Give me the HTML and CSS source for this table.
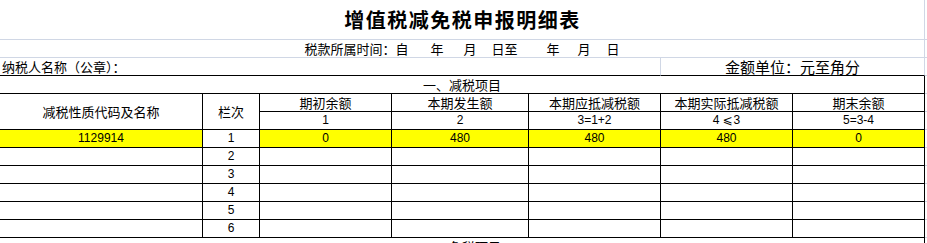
FILE: index.html
```html
<!DOCTYPE html>
<html lang="zh-CN">
<head>
<meta charset="utf-8">
<title>增值税减免税申报明细表</title>
<link rel="stylesheet" href="styles.css">
</head>
<body>
<div class="page">
  <div class="band">
    <div class="cell-wide title-cell"><h1 class="title">增值税减免税申报明细表</h1></div>
    <div class="filler"></div>
  </div>
  <div class="band">
    <div class="cell-wide period">
      <span>税款所属时间：自</span><span class="g22">年</span><span class="g20">月</span><span class="g15">日至</span><span class="g29">年</span><span class="g18">月</span><span class="g16">日</span>
    </div>
    <div class="filler"></div>
  </div>
  <div class="band">
    <div class="cell-left taxpayer">纳税人名称（公章）：</div>
    <div class="cell-right unit">金额单位：元至角分</div>
    <div class="filler"></div>
  </div>
  <div class="table-wrap">
    <div class="grid">
      <div class="c span-all">一、减税项目</div>
      <div class="c rs2">减税性质代码及名称</div>
      <div class="c rs2">栏次</div>
      <div class="c">期初余额</div>
      <div class="c">本期发生额</div>
      <div class="c">本期应抵减税额</div>
      <div class="c">本期实际抵减税额</div>
      <div class="c">期末余额</div>
      <div class="c num">1</div>
      <div class="c num">2</div>
      <div class="c num">3=1+2</div>
      <div class="c num">4<span class="le">⩽</span>3</div>
      <div class="c num">5=3-4</div>

      <div class="c num hl">1129914</div>
      <div class="c num">1</div>
      <div class="c num hl">0</div>
      <div class="c num hl">480</div>
      <div class="c num hl">480</div>
      <div class="c num hl">480</div>
      <div class="c num hl">0</div>

      <div class="c"></div><div class="c num">2</div><div class="c"></div><div class="c"></div><div class="c"></div><div class="c"></div><div class="c"></div>
      <div class="c"></div><div class="c num">3</div><div class="c"></div><div class="c"></div><div class="c"></div><div class="c"></div><div class="c"></div>
      <div class="c"></div><div class="c num">4</div><div class="c"></div><div class="c"></div><div class="c"></div><div class="c"></div><div class="c"></div>
      <div class="c"></div><div class="c num">5</div><div class="c"></div><div class="c"></div><div class="c"></div><div class="c"></div><div class="c"></div>
      <div class="c"></div><div class="c num">6</div><div class="c"></div><div class="c"></div><div class="c"></div><div class="c"></div><div class="c"></div>

      <div class="c span-all">二、免税项目</div>
    </div>
    <div class="gutter"></div>
  </div>
</div>
</body>
</html>
```

FILE: styles.css
```css
html, body {
  margin: 0;
  padding: 0;
  background: #ffffff;
}

body {
  font-family: "Liberation Sans", "Noto Sans CJK SC", sans-serif;
  font-size: 13px;
  color: #000000;
  overflow: hidden;
}

.page {
  width: 927px;
}

.band {
  display: flex;
}

.cell-wide {
  width: 924px;
  border-right: 1px solid #d0d7e5;
  border-bottom: 1px solid #d0d7e5;
  box-sizing: content-box;
}

.filler {
  flex: 1;
  border-bottom: 1px solid #d0d7e5;
}

.title-cell {
  height: 39px;
  display: flex;
  align-items: center;
  justify-content: center;
}

.title {
  margin: 0;
  font-family: "Noto Sans CJK SC", sans-serif;
  font-size: 20px;
  font-weight: 700;
  letter-spacing: 1.5px;
  line-height: 20px;
  padding-left: 1px;
  padding-top: 0;
}

.period {
  height: 17px;
  line-height: 17px;
  display: flex;
  justify-content: center;
  font-family: "Noto Sans CJK SC", sans-serif;
  font-size: 13px;
}

.g15 { margin-left: 15px; }
.g16 { margin-left: 16px; }
.g18 { margin-left: 18px; }
.g20 { margin-left: 20px; }
.g22 { margin-left: 22px; }
.g29 { margin-left: 29px; }

.cell-left {
  width: 660px;
  height: 17px;
  border-right: 1px solid #d0d7e5;
  border-bottom: 1px solid #000000;
}

.cell-right {
  width: 263px;
  height: 17px;
  border-right: 1px solid #d0d7e5;
  border-bottom: 1px solid #000000;
}

.taxpayer {
  font-family: "Noto Sans CJK SC", sans-serif;
  font-size: 13px;
  line-height: 17px;
  padding-left: 2px;
  width: 658px;
}

.unit {
  font-family: "Noto Sans CJK SC", sans-serif;
  font-size: 15px;
  line-height: 17px;
  text-align: center;
}

.table-wrap {
  display: flex;
  align-items: stretch;
}

.grid {
  display: grid;
  grid-template-columns: 202px 56px 131px 136px 131px 131px 131px;
  grid-auto-rows: 17px;
  gap: 1px;
  padding-right: 1px;
  background: #000000;
  width: 924px;
}

.gutter {
  flex: 1;
  background: repeating-linear-gradient(to bottom, #ffffff 0 17px, #d0d7e5 17px 18px);
}

.c {
  background: #ffffff;
  display: flex;
  align-items: center;
  justify-content: center;
  font-family: "Noto Sans CJK SC", sans-serif;
  font-size: 13px;
  line-height: 17px;
  white-space: nowrap;
  overflow: hidden;
}

.span-all {
  grid-column: 1 / -1;
}

.rs2 {
  grid-row: span 2;
}

.num {
  font-family: "Liberation Sans", "Noto Sans CJK SC", sans-serif;
  font-size: 12px;
}

.le {
  font-family: "DejaVu Sans", sans-serif;
  margin: 0 1px 0 3px;
}

.hl {
  background: #ffff00;
}
```
